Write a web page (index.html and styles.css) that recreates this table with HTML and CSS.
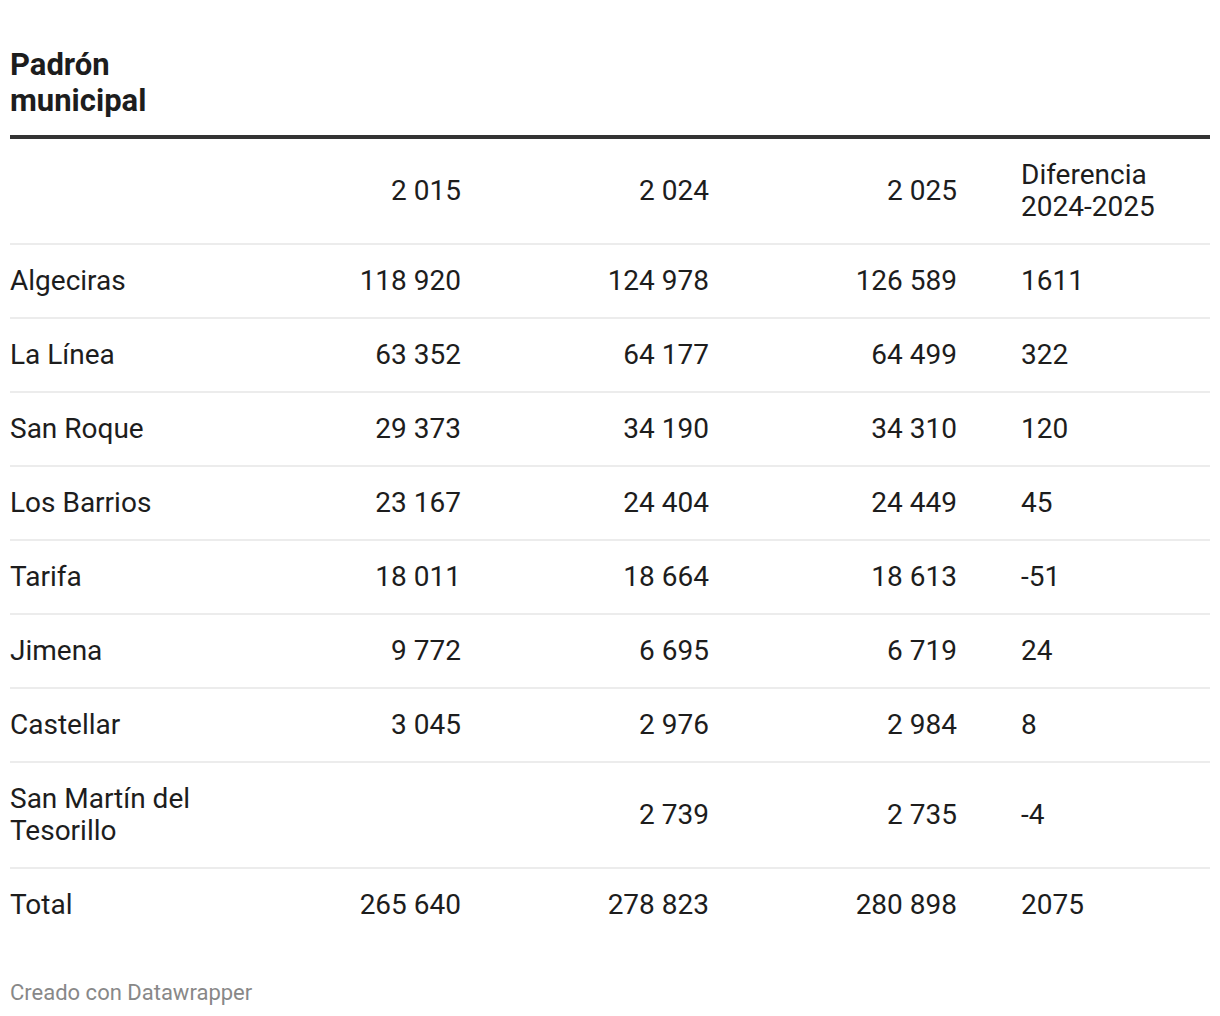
FILE: index.html
```html
<!DOCTYPE html>
<html lang="es">
<head>
<meta charset="utf-8">
<title>Padrón municipal</title>
<link rel="stylesheet" href="styles.css">
</head>
<body>
<div class="chart">
  <h1 class="title">Padrón<br>municipal</h1>
  <table class="data">
    <colgroup>
      <col class="c-name"><col class="c-num"><col class="c-num"><col class="c-num"><col class="c-diff">
    </colgroup>
    <thead>
      <tr>
        <th class="name"></th>
        <th class="num">2 015</th>
        <th class="num">2 024</th>
        <th class="num">2 025</th>
        <th class="diff">Diferencia<br>2024-2025</th>
      </tr>
    </thead>
    <tbody>
      <tr><td class="name">Algeciras</td><td class="num">118 920</td><td class="num">124 978</td><td class="num">126 589</td><td class="diff">1611</td></tr>
      <tr><td class="name">La Línea</td><td class="num">63 352</td><td class="num">64 177</td><td class="num">64 499</td><td class="diff">322</td></tr>
      <tr><td class="name">San Roque</td><td class="num">29 373</td><td class="num">34 190</td><td class="num">34 310</td><td class="diff">120</td></tr>
      <tr><td class="name">Los Barrios</td><td class="num">23 167</td><td class="num">24 404</td><td class="num">24 449</td><td class="diff">45</td></tr>
      <tr><td class="name">Tarifa</td><td class="num">18 011</td><td class="num">18 664</td><td class="num">18 613</td><td class="diff">-51</td></tr>
      <tr><td class="name">Jimena</td><td class="num">9 772</td><td class="num">6 695</td><td class="num">6 719</td><td class="diff">24</td></tr>
      <tr><td class="name">Castellar</td><td class="num">3 045</td><td class="num">2 976</td><td class="num">2 984</td><td class="diff">8</td></tr>
      <tr><td class="name">San Martín del<br>Tesorillo</td><td class="num"></td><td class="num">2 739</td><td class="num">2 735</td><td class="diff">-4</td></tr>
      <tr class="total"><td class="name">Total</td><td class="num">265 640</td><td class="num">278 823</td><td class="num">280 898</td><td class="diff">2075</td></tr>
    </tbody>
  </table>
  <div class="footer">Creado con Datawrapper</div>
</div>
</body>
</html>
```

FILE: styles.css
```css
html, body {
  margin: 0;
  padding: 0;
  background: #ffffff;
}

body {
  font-family: Roboto, "Liberation Sans", sans-serif;
  color: #1d1d1d;
}

.chart {
  padding: 47px 10px 0 10px;
}

.title {
  margin: 0 0 16px 0;
  font-size: 31px;
  line-height: 36px;
  font-weight: 700;
  color: #1d1d1d;
}

.data {
  width: 1200px;
  border-collapse: collapse;
  table-layout: fixed;
  font-size: 28px;
  line-height: 32px;
}

.c-name { width: 203px; }
.c-num { width: 248px; }
.c-diff { width: 253px; }

.data thead tr {
  border-top: 4px solid #333333;
}

.data th {
  font-weight: 400;
}

.data th,
.data td {
  padding: 20px 0;
  vertical-align: middle;
}

.data tr {
  border-bottom: 2px solid #ececec;
}

.data tr.total {
  border-bottom: none;
}

.name { text-align: left; }
.num { text-align: right; }
.diff { text-align: left; padding-left: 64px !important; }

.footer {
  margin-top: 40px;
  font-size: 22px;
  line-height: 24px;
  color: #888888;
}
```
